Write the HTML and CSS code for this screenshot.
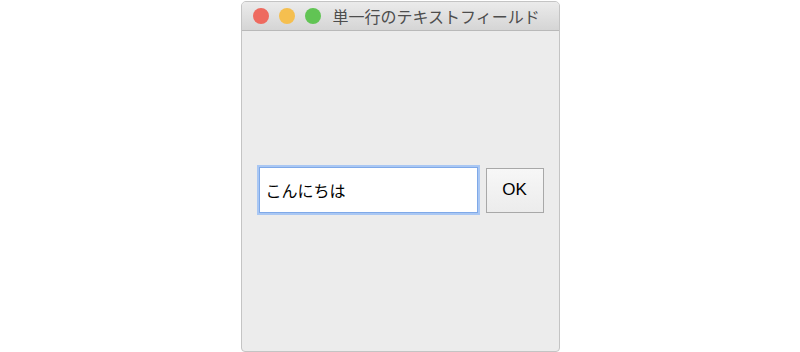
FILE: index.html
```html
<!DOCTYPE html>
<html lang="ja">
<head>
  <meta charset="UTF-8">
  <title>単一行のテキストフィールド</title>
  <link rel="stylesheet" href="styles.css">
</head>
<body>

  <div class="window">
    <div class="titlebar">
      <div class="lights">
        <span class="light red"></span>
        <span class="light yellow"></span>
        <span class="light green"></span>
      </div>
      <div class="title">単一行のテキストフィールド</div>
    </div>

    <div class="content">
      <input type="text" class="field" value="こんにちは">
      <button class="ok-button">OK</button>
    </div>
  </div>

</body>
</html>
```

FILE: styles.css
```css
body {
  margin: 0;
  background: #ffffff;
  font-family: 'Liberation Sans', 'Noto Sans CJK JP', sans-serif;
}

.window {
  width: 317px;
  height: 349px;
  margin: 1px auto 0;
  border: 1px solid #c4c4c4;
  border-radius: 5px 5px 4px 4px;
  background: #ececec;
  display: flex;
  flex-direction: column;
  overflow: hidden;
}

.titlebar {
  height: 28px;
  display: flex;
  align-items: center;
  background: linear-gradient(#ebebeb, #d5d5d5);
  border-bottom: 1px solid #b9b9b9;
}

.lights {
  display: flex;
  gap: 10px;
  padding-left: 11px;
}

.light {
  width: 16px;
  height: 16px;
  border-radius: 50%;
}

.red { background: #ee6a5f; }
.yellow { background: #f5bf4f; }
.green { background: #61c454; }

.title {
  margin-left: 12px;
  font-size: 16px;
  color: #4d4d4d;
  font-family: 'Noto Sans CJK JP', sans-serif;
}

.content {
  flex: 1;
  display: flex;
  align-items: center;
  gap: 8px;
  padding: 0 15px 2px 17px;
}

.field {
  flex: 1;
  min-width: 0;
  box-sizing: border-box;
  height: 46px;
  margin: 0;
  border: 1px solid #7fa9e8;
  box-shadow: 0 0 0 2px #a9c7f3;
  padding: 0 6px;
  background: #ffffff;
  font-size: 16px;
  font-family: 'Noto Sans CJK JP', sans-serif;
  color: #000000;
  outline: none;
}

.ok-button {
  width: 58px;
  height: 45px;
  border: 1px solid #a8a8a8;
  background: linear-gradient(#f7f7f7, #ececec);
  font-size: 17px;
  font-family: 'Liberation Sans', sans-serif;
  color: #000000;
  padding: 0;
}
```
